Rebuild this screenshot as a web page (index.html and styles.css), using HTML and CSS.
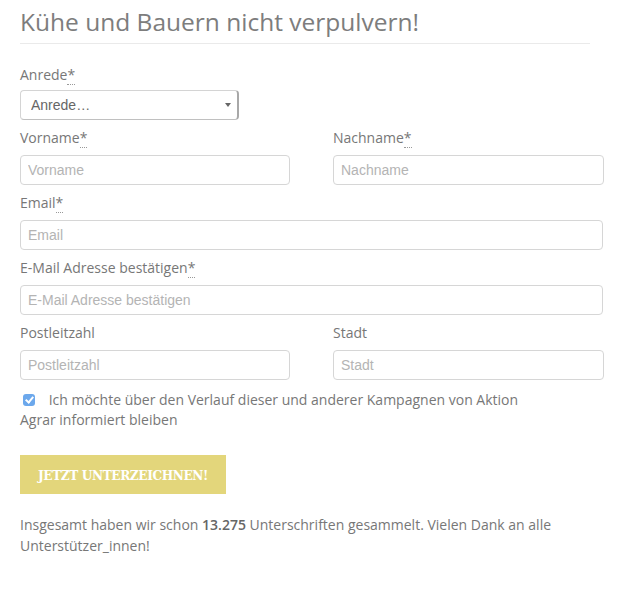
FILE: index.html
```html
<!DOCTYPE html>
<html lang="de">
<head>
<meta charset="utf-8">
<title>Kühe und Bauern nicht verpulvern!</title>
<link rel="stylesheet" href="styles.css">
</head>
<body>
<main class="page">
  <h1 class="title">Kühe und Bauern nicht verpulvern!</h1>
  <hr class="rule">
  <form class="form">
    <div class="group">
      <label class="label">Anrede<abbr class="req" title="Pflichtfeld">*</abbr></label>
      <div class="select-wrap">
        <select class="select"><option>Anrede…</option></select>
        <span class="select-arrow"></span>
      </div>
    </div>
    <div class="row">
      <div class="group">
        <label class="label">Vorname<abbr class="req" title="Pflichtfeld">*</abbr></label>
        <input class="input" type="text" placeholder="Vorname">
      </div>
      <div class="group">
        <label class="label">Nachname<abbr class="req" title="Pflichtfeld">*</abbr></label>
        <input class="input" type="text" placeholder="Nachname">
      </div>
    </div>
    <div class="group">
      <label class="label">Email<abbr class="req" title="Pflichtfeld">*</abbr></label>
      <input class="input" type="email" placeholder="Email">
    </div>
    <div class="group">
      <label class="label">E-Mail Adresse bestätigen<abbr class="req" title="Pflichtfeld">*</abbr></label>
      <input class="input" type="email" placeholder="E-Mail Adresse bestätigen">
    </div>
    <div class="row">
      <div class="group">
        <label class="label">Postleitzahl</label>
        <input class="input" type="text" placeholder="Postleitzahl">
      </div>
      <div class="group">
        <label class="label">Stadt</label>
        <input class="input" type="text" placeholder="Stadt">
      </div>
    </div>
    <label class="optin"><input class="check" type="checkbox" checked> Ich möchte über den Verlauf dieser und anderer Kampagnen von Aktion Agrar informiert bleiben</label>
    <button class="submit" type="button">Jetzt unterzeichnen!</button>
    <p class="count">Insgesamt haben wir schon <strong>13.275</strong> Unterschriften gesammelt. Vielen Dank an alle Unterstützer_innen!</p>
  </form>
</main>
</body>
</html>
```

FILE: styles.css
```css
html, body {
  margin: 0;
  padding: 0;
  background: #fff;
}

.page {
  padding: 6px 20px 20px 20px;
  width: 583px;
  font-family: "Open Sans", "Liberation Sans", sans-serif;
  color: #777;
}

.title {
  margin: 0;
  font-size: 24.5px;
  font-weight: 400;
  line-height: 32px;
  color: #7d7d7d;
}

.rule {
  width: 570px;
  margin: 5px 0 21px 0;
  border: 0;
  border-top: 1px solid #eaeaea;
}

.form {
  display: flex;
  flex-direction: column;
}

.row {
  display: grid;
  grid-template-columns: 270px 271px;
  column-gap: 43px;
}

.group {
  display: flex;
  flex-direction: column;
  align-items: flex-start;
  margin-bottom: 8px;
}

.label {
  font-size: 14px;
  line-height: 20px;
  margin-bottom: 7px;
  color: #777;
}

.req {
  text-decoration: none;
  border-bottom: 1px dotted #999;
  cursor: help;
}

.input {
  box-sizing: border-box;
  width: 100%;
  height: 30px;
  margin: 0;
  padding: 4px 7px;
  border: 1px solid #d6d6d6;
  border-radius: 4px;
  font-family: "Liberation Sans", Arial, sans-serif;
  font-size: 14px;
  color: #555;
  background: #fff;
}

.input::placeholder {
  color: #b4b4b4;
}

.select-wrap {
  position: relative;
  width: 219px;
  height: 30px;
  margin-top: -2px;
}

.select {
  appearance: none;
  -webkit-appearance: none;
  box-sizing: border-box;
  width: 100%;
  height: 100%;
  margin: 0;
  padding: 3px 10px;
  border: 1px solid #d4d4d4;
  border-right: 2px solid #a8a8a8;
  border-bottom: 1px solid #c0c0c0;
  border-radius: 4px;
  background: #fff;
  font-family: "Liberation Sans", Arial, sans-serif;
  font-size: 14px;
  color: #666;
}

.select-arrow {
  position: absolute;
  right: 8px;
  top: 13px;
  width: 0;
  height: 0;
  border-left: 3px solid transparent;
  border-right: 3px solid transparent;
  border-top: 4px solid #666;
}

.optin {
  display: block;
  width: 520px;
  margin-top: 2px;
  font-size: 14px;
  line-height: 20px;
  color: #777;
}

.check {
  appearance: none;
  -webkit-appearance: none;
  display: inline-block;
  box-sizing: border-box;
  width: 12px;
  height: 12px;
  margin: 0 10px 0 3px;
  vertical-align: -1px;
  border-radius: 3px;
  background: #6ca8ec;
  position: relative;
}

.check::after {
  content: "";
  position: absolute;
  left: 4px;
  top: 1px;
  width: 3px;
  height: 6px;
  border: solid #fff;
  border-width: 0 2px 2px 0;
  transform: rotate(40deg);
}

.submit {
  align-self: flex-start;
  margin-top: 25px;
  width: 206px;
  height: 39px;
  border: 0;
  border-radius: 0;
  background: #e3d67b;
  color: #fff;
  font-family: "DejaVu Serif", "Liberation Serif", serif;
  font-weight: 700;
  font-size: 13.5px;
  font-stretch: condensed;
  letter-spacing: -0.4px;
  text-transform: uppercase;
  padding: 0;
}

.count {
  margin: 20px 0 0 0;
  font-size: 14px;
  line-height: 21px;
  color: #777;
}

.count strong {
  font-weight: 600;
  color: #666;
}
```
